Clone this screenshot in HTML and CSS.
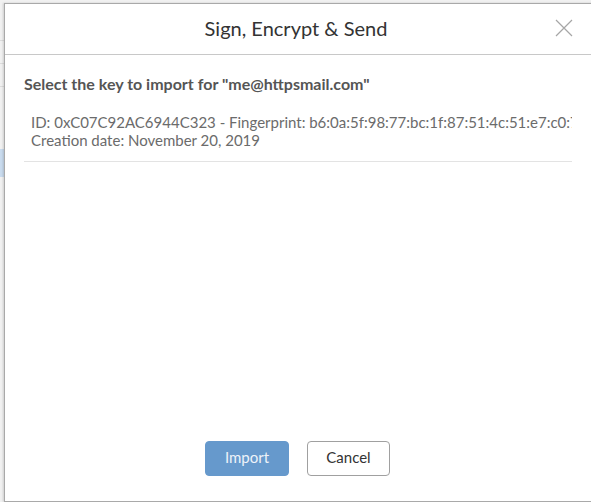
FILE: index.html
```html
<!DOCTYPE html>
<html lang="en">
  <head>
    <meta charset="UTF-8" />
    <meta name="viewport" content="width=device-width, initial-scale=1.0" />
    <title>Sign, Encrypt &amp; Send</title>
    <link rel="stylesheet" href="styles.css">
  </head>
  <body>
    <!-- phần nền phía sau hộp thoại -->
    <div class="backdrop">
      <div class="bg-row"></div>
      <div class="bg-row"></div>
      <div class="bg-row"></div>
      <div class="bg-row selected"></div>
    </div>

    <div class="modal">
      <div class="modal-header">
        <h1 class="modal-title">Sign, Encrypt &amp; Send</h1>
        <button class="close-btn" aria-label="Close">
          <svg width="18" height="18" viewBox="0 0 18 18">
            <path d="M1 1 L17 17 M17 1 L1 17" stroke="#a6a6a6" stroke-width="1.2" fill="none" />
          </svg>
        </button>
      </div>

      <div class="modal-body">
        <h2 class="key-heading">Select the key to import for "me@httpsmail.com"</h2>
        <ul class="key-list">
          <li class="key-item">
            <div class="key-line">ID: 0xC07C92AC6944C323 - Fingerprint: b6:0a:5f:98:77:bc:1f:87:51:4c:51:e7:c0:7c:92:ac:69:44:c3:23</div>
            <div class="key-line">Creation date: November 20, 2019</div>
          </li>
        </ul>
      </div>

      <div class="modal-footer">
        <button class="btn btn-primary">Import</button>
        <button class="btn btn-default">Cancel</button>
      </div>
    </div>
  </body>
</html>
```

FILE: styles.css
```css
body {
  margin: 0;
  overflow: hidden;
  font-family: Lato, "Open Sans", sans-serif;
  background: #f1f1f1;
  height: 502px;
}

.backdrop {
  display: flex;
  flex-direction: column;
  padding-top: 40px;
}

.bg-row {
  height: 22px;
  border-top: 1px solid #dcdcdc;
}

.bg-row.selected {
  margin-top: 40px;
  height: 28px;
  background: #c9dbee;
  border-top: none;
}

.modal {
  position: absolute;
  top: 3px;
  left: 4px;
  width: 590px;
  height: 499px;
  box-sizing: border-box;
  background: #fff;
  border: 1px solid #a9a9a9;
  box-shadow: -1px 0 2px rgba(0, 0, 0, 0.15);
  display: flex;
  flex-direction: column;
}

.modal-header {
  height: 51px;
  box-sizing: border-box;
  border-bottom: 1px solid #c8c8c8;
  display: flex;
  align-items: center;
  padding: 0 20px 2px 84px;
}

.modal-title {
  flex: 1;
  margin: 0;
  text-align: center;
  font-size: 20px;
  font-weight: 400;
  color: #333;
}

.close-btn {
  width: 70px;
  height: 24px;
  padding: 0;
  border: none;
  background: none;
  display: flex;
  justify-content: flex-end;
  align-items: center;
  cursor: pointer;
}

.modal-body {
  flex: 1;
  padding: 19px 21px 0 19px;
}

.key-heading {
  margin: 0 0 20px;
  font-size: 16px;
  font-weight: 700;
  color: #555;
}

.key-list {
  list-style: none;
  margin: 0;
  padding: 0;
}

.key-item {
  padding: 0 0 12px 7px;
  border-bottom: 1px solid #e3e3e3;
  overflow: hidden;
}

.key-line {
  white-space: nowrap;
  font-size: 15px;
  line-height: 18px;
  color: #6b6b6b;
}

.modal-footer {
  display: flex;
  justify-content: center;
  gap: 18px;
  padding: 0 3px 25px 0;
}

.btn {
  height: 35px;
  padding: 0 0 3px;
  font-family: inherit;
  font-size: 15px;
  border-radius: 4px;
  cursor: pointer;
}

.btn-primary {
  width: 84px;
  background: #6699cc;
  border: 1px solid #6699cc;
  color: #eef3f9;
}

.btn-default {
  width: 83px;
  background: #fff;
  border: 1px solid #a0a0a0;
  color: #333;
}
```
